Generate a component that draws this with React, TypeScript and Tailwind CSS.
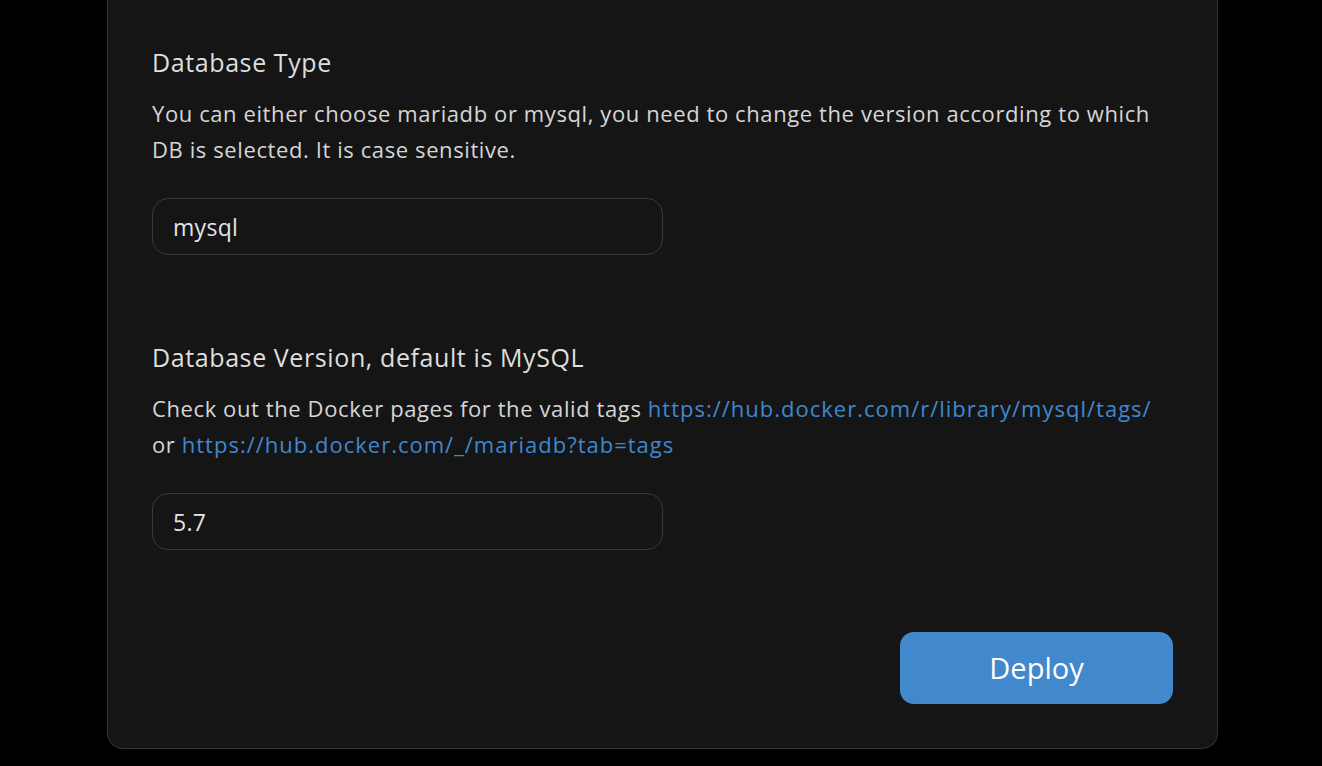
import React from 'react';

const font = { fontFamily: '"Open Sans", Lato, sans-serif' };

type FieldProps = {
  title: string;
  children: React.ReactNode;
  value: string;
  className?: string;
};

const Field: React.FC<FieldProps> = ({ title, children, value, className }) => (
  <div className={className}>
    <h3 className="text-[25px] leading-[36px] tracking-[0.6px] text-[#dedede]">{title}</h3>
    <p className="mt-[15px] text-[22px] leading-[36px] tracking-[0.6px] text-[#d6d6d6]">{children}</p>
    <input
      readOnly
      value={value}
      className="mt-[31px] block h-[57px] w-[511px] rounded-[16px] border border-[#3a3a3a] bg-[#151515] px-[20px] text-[23px] tracking-[0.3px] text-[#e4e4e4] outline-none"
      style={font}
    />
  </div>
);

export default function App() {
  return (
    <div className="min-h-screen bg-black" style={font}>
      <div className="ml-[107px] mr-[104px] rounded-b-[16px] border-x border-b border-[#333] bg-[#151515] px-[44px] pt-[44px] pb-[44px]">
        {/* Database type */}
        <Field title="Database Type" value="mysql">
          You can either choose mariadb or mysql, you need to change the version according to which DB is
          selected. It is case sensitive.
        </Field>

        {/* Database version */}
        <Field title="Database Version, default is MySQL" value="5.7" className="mt-[84px]">
          Check out the Docker pages for the valid tags{' '}
          <a href="#" className="tracking-[1px] text-[#3f88d0]">https://hub.docker.com/r/library/mysql/tags/</a> or{' '}
          <a href="#" className="tracking-[1px] text-[#3f88d0]">https://hub.docker.com/_/mariadb?tab=tags</a>
        </Field>

        <div className="mt-[82px] flex justify-end">
          <button className="h-[72px] w-[273px] rounded-[14px] bg-[#4288cc] text-[29px] text-white">Deploy</button>
        </div>
      </div>
    </div>
  );
}
